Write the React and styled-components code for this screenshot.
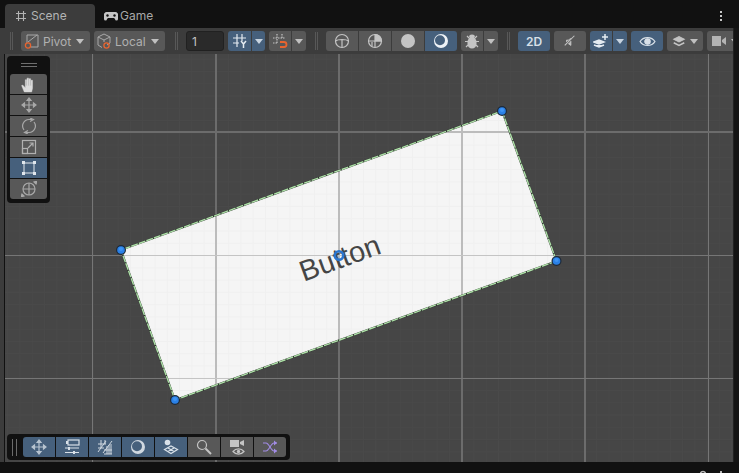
import React from "react";
import styled, { createGlobalStyle } from "styled-components";

const Global = createGlobalStyle`
  html, body { margin: 0; padding: 0; background: #111; }
  #root { width: 739px; height: 473px; overflow: hidden; }
`;

const Window = styled.div`
  width: 739px; height: 473px; display: flex; flex-direction: column;
  background: #111111; font-family: Inter, "Noto Sans", sans-serif; overflow: hidden;
`;
const TabBar = styled.div`
  height: 28px; flex: none; display: flex; align-items: flex-end; padding-left: 5px; position: relative;
`;
const Tab = styled.div`
  width: ${p => p.$w}px; height: 24px; display: flex; align-items: center; gap: ${p => p.$gap}px;
  padding-left: ${p => p.$pad}px; box-sizing: border-box; border-radius: 4px 4px 0 0;
  background: ${p => (p.$active ? "#3c3c3c" : "transparent")};
  color: ${p => (p.$active ? "#b4b4b4" : "#a8a8a8")}; font-size: 12px; line-height: 16px;
`;
const Kebab = styled.div`
  margin-left: auto; margin-right: 17px; align-self: center; margin-top: 4px;
  display: flex; flex-direction: column; gap: 2px;
  i { display: block; width: 2px; height: 2px; background: #c8c8c8; }
`;
const Body = styled.div`flex: none; height: 434px; display: flex;`;
const Main = styled.div`width: 733px; flex: none; display: flex; flex-direction: column;`;
const RightEdge = styled.div`
  flex: 1; background: #141414; border-left: 1px solid #222;
`;
const Toolbar = styled.div`
  height: 26px; flex: none; background: #3c3c3c; display: flex; align-items: center; gap: 4px;
  padding-left: 4px; overflow: hidden;
`;
const Grip = styled.div`
  flex: none; width: 3px; height: 18px; margin-left: ${p => p.$ml}px; margin-right: ${p => p.$mr}px;
  border-left: 1px solid #585858; border-right: 1px solid #585858; box-sizing: border-box;
`;
const Group = styled.div`display: flex; gap: 1px; flex: none;`;
const ToolButton = styled.div`
  flex: none; height: 20px; width: ${p => p.$w}px; box-sizing: border-box;
  display: flex; align-items: center; justify-content: ${p => (p.$pl !== undefined ? "flex-start" : "center")};
  padding-left: ${p => p.$pl || 0}px; gap: ${p => p.$gap || 0}px;
  background: ${p => (p.$on ? "#46607c" : "#585858")};
  color: ${p => (p.$on ? "#d8e0e8" : "#b0b0b0")};
  font-size: 12px; font-weight: ${p => (p.$bold ? 600 : 400)};
  border-radius: ${p => p.$radius || "3px"};
`;
const Caret = styled.span`
  flex: none; width: 0; height: 0; margin-left: ${p => p.$ml || 0}px;
  border-left: 4px solid transparent; border-right: 4px solid transparent;
  border-top: 5px solid ${p => (p.$on ? "#c8d4e0" : "#c0c0c0")};
`;
const NumberField = styled.div`
  flex: none; width: 38px; height: 20px; box-sizing: border-box; background: #2a2a2a;
  border: 1px solid #212121; border-radius: 3px; color: #c4c4c4; font-size: 12px;
  display: flex; align-items: center; padding-left: 5px;
`;
const Row = styled.div`flex: 1; display: flex; min-height: 0;`;
const LeftEdge = styled.div`
  width: 4px; flex: none; background: #3c3c3c; border-right: 1px solid #111;
`;
const Viewport = styled.div`flex: 1; position: relative; background: #464646; overflow: hidden;`;
const Scene = styled.svg`display: block; width: 728px; height: 408px;`;
const ButtonLabel = styled.text`
  font-family: "Liberation Sans", Arial, sans-serif; font-size: 29px; fill: #454545;
`;
const SideOverlay = styled.div`
  position: absolute; left: 2px; top: 2px; width: 43px; height: 147px; box-sizing: border-box;
  background: #111111; border-radius: 4px; padding: 0 3px; display: flex; flex-direction: column; gap: 1px;
`;
const SideGrip = styled.div`
  height: 17px; flex: none; display: flex; flex-direction: column; justify-content: center; align-items: center; gap: 2px;
  i { display: block; width: 16px; height: 1px; background: #6e6e6e; }
`;
const BottomOverlay = styled.div`
  position: absolute; left: 2px; top: 380px; height: 26px; width: 283px; box-sizing: border-box;
  background: #111111; border-radius: 4px; padding-left: 5px; display: flex; align-items: center; gap: 6px;
`;
const VGrip = styled.div`
  width: 5px; height: 17px; flex: none; box-sizing: border-box;
  border-left: 1px solid #6a6a6a; border-right: 1px solid #6a6a6a;
`;
const Footer = styled.div`flex: 1; position: relative; display: flex; justify-content: flex-end; gap: 12px; padding-right: 15px;`;
const FootMark = styled.svg`width: 6px; height: 11px; display: block;`;

const Ico = ({ s = 16, children, c = "#c4c4c4" }) => (
  <svg width={s} height={s} viewBox="0 0 16 16" fill="none" stroke={c} strokeWidth="1.2" style={{ flex: "none" }}>{children}</svg>
);
const OR = "#e8642f";

const PivotI = () => <Ico><path d="M3 10V2h11v12H7M4 9 13 2" strokeWidth="1" stroke="#a8a8a8" /><circle cx="4" cy="12.5" r="2.6" stroke={OR} strokeWidth="1.3" /></Ico>;
const LocalI = () => <Ico><path d="M8 1 14 4v6l-3 2M8 1 2 4v8l4 2.5M2 4l6 3 6-3M8 7v2" strokeWidth="1" stroke="#a8a8a8" /><circle cx="10.5" cy="12.5" r="2.6" stroke={OR} strokeWidth="1.3" /></Ico>;
const GridY = () => <Ico c="#e4eaf0"><path d="M5 1v13M10 1v7M1 5h13M1 10h6" /><path d="M9 8l2.500 3L14 8M11.500 11v4" strokeWidth="1.500" /></Ico>;
const GridMag = () => <Ico><path d="M5 1v9M10 1v4M1 5h12M1 10h5" strokeDasharray="1.5 1" /><path d="M8 9h4a2.500 2.500 0 0 1 0 5H8" stroke={OR} strokeWidth="1.800" /></Ico>;
const Globe = () => <Ico><circle cx="8" cy="8" r="6.500" /><path d="M1.500 8C4 6 12 6 14.500 8M8 7v7.500" /></Ico>;
const HalfGlobe = () => <Ico><circle cx="8" cy="8" r="6.500" /><path d="M8 8V1.500A6.500 6.500 0 0 1 14.500 8z" fill="#c4c4c4" /><path d="M1.500 8h13M5 9v4.500M8 8v6.500" /></Ico>;
const Solid = () => <Ico><circle cx="8" cy="8" r="7" fill="#c4c4c4" stroke="none" /></Ico>;
const Crescent = ({ c = "#eef2f6" }) => <Ico c={c}><path fillRule="evenodd" stroke="none" fill={c} d="M8 1a7 7 0 1 0 0 14A7 7 0 0 0 8 1zM7 2.200a5 5 0 1 1 0 10 5 5 0 0 1 0-10z" /></Ico>;
const Bug = () => <Ico><path d="M5 5h6l1.500 3v3a4.500 4.500 0 0 1-9 0V8z" fill="#c4c4c4" stroke="none" /><ellipse cx="8" cy="3.500" rx="2.800" ry="2" fill="#c4c4c4" stroke="none" /><path d="M3 3l2 2M13 3l-2 2M1 8.500h3M15 8.500h-3M2 14l2-2M14 14l-2-2" /></Ico>;
const Mute = () => <Ico s={14}><path d="M2 13 13 2" /><path d="M4 9v-2h2l3-2M9 8v5l-3-2" fill="#c4c4c4" strokeWidth="1" /></Ico>;
const Fx = () => <Ico c="#e4ebf2"><path d="M1 9l5-2 5 2-5 2zM1 12l5 2 5-2" strokeWidth="1.500" fill="#e4ebf2" /><path d="M12 1v6M9 4h6" strokeWidth="1.500" /></Ico>;
const Eye = () => <Ico s={17} c="#d8e0e8"><path d="M1 8c3-5 11-5 14 0-3 5-11 5-14 0z" /><circle cx="8" cy="8" r="2.500" fill="#d8e0e8" /></Ico>;
const Layers = () => <Ico s={14}><path d="M2 6l6-3 6 3-6 3z" fill="#c4c4c4" /><path d="M2 10l6 3 6-3" strokeWidth="1.800" /></Ico>;
const Cam = () => <Ico><rect x="1" y="3" width="9" height="10" fill="#b4b4b4" stroke="none" /><path d="M11 7l4-3v8l-4-3z" fill="#b4b4b4" stroke="none" /></Ico>;

const Hand = () => <Ico s={17} c="#dcdcdc"><path d="M4 15 1.500 9l1-.5L5 11V3.500h1.200V9h.4V2h1.500v7h.4V2.500h1.500V9h.4V4h1.400v7.500L11 15z" fill="#dcdcdc" stroke="#dcdcdc" strokeWidth=".4" /></Ico>;
const Move = ({ c = "#a8a8a8" }) => <Ico c={c}><path d="M8 3v10M3 8h10" /><path d="M6 3.500 8 1l2 2.500zM6 12.500 8 15l2-2.500zM3.500 6 1 8l2.500 2zM12.500 6 15 8l-2.500 2z" fill={c} /></Ico>;
const Rotate = () => <Ico c="#a8a8a8"><path d="M3 12A6.500 6.500 0 0 1 8 1.500h3M13 4a6.500 6.500 0 0 1-5 10.500H5" /><path d="M9 0l3.500 1.500L9 3.500M7 12.500l-3.500 2L7 16" /></Ico>;
const Scale = () => <Ico c="#b0b0b0"><rect x="1.500" y="1.500" width="13" height="13" /><rect x="1.500" y="9.500" width="5" height="5" /><path d="M7 9l5-5M8.500 4H12v3.500" /></Ico>;
const RectT = () => <Ico c="#e0e6ec"><path d="M3 3h10v10H3z" strokeWidth="1" /><path d="M1 1h3v3H1zM12 1h3v3h-3zM1 12h3v3H1zM12 12h3v3h-3z" fill="#e0e6ec" stroke="none" /></Ico>;
const Transform = () => <Ico c="#a8a8a8"><circle cx="8" cy="8" r="6" /><path d="M8 2v12M2 8h12" /><path d="M0 16l3-1-2-2zM16 0l-3 1 2 2z" fill="#a8a8a8" /></Ico>;
const Sliders = () => <Ico c="#d8e0e8"><rect x="4" y="1" width="11" height="5" /><path d="M1 9h14M1 13.500h14" /><path d="M3 2v3M5 8v3M10 12v3" strokeWidth="2" /></Ico>;
const Hatch = () => <Ico c="#d0d8e0"><path d="M1 5h8M1 9h6M1 13l8-11M4 1v8M8 1v4M6 14 15 2M10 7v8M12 6v9M14 5v10M7 11h8M7 15h8" strokeWidth="1" /></Ico>;
const Sphere = () => <Ico c="#d8e0e8"><circle cx="4.500" cy="3.500" r="2.800" fill="#d8e0e8" stroke="none" /><path d="M1.500 10.500 8 7l6.500 3.500L8 14.500zM5 9l6 3.500M11 9l-6 3.500" /></Ico>;
const Search = () => <Ico><circle cx="6" cy="6" r="4.500" /><path d="M9.500 9.500 15 15" strokeWidth="2" /></Ico>;
const CamEye = () => <Ico><rect x="1" y="1" width="9" height="7" fill="#c4c4c4" stroke="none" /><path d="M11 3l4-2v6l-4-2z" fill="#c4c4c4" stroke="none" /><path d="M4 12.500c3-3.500 8-3.500 11 0-3 3.500-8 3.500-11 0z" fill="#585858" /><circle cx="9.500" cy="12.500" r="1.700" fill="#c4c4c4" stroke="none" /></Ico>;
const Shuffle = () => <Ico c="#a28ce6"><path d="M1 4h3c3 0 5 8 8 8h3M1 12h3c3 0 5-8 8-8h3" /><path d="M12 1.500 15 4l-3 2.500zM12 9.500l3 2.500-3 2.500z" fill="#a28ce6" stroke="none" /></Ico>;
const GameI = () => <svg width="14" height="9" viewBox="0 0 14 9" style={{ flex: "none" }}><path d="M3 0h8a3 3 0 0 1 3 4v3a1.500 1.500 0 0 1-3 0L10 6H4L3 7a1.500 1.500 0 0 1-3 0V4a3 3 0 0 1 3-4z" fill="#c4c4c4" /><circle cx="3.500" cy="3.500" r="1.200" fill="#111" /><circle cx="10.500" cy="3.500" r="1.200" fill="#111" /></svg>;
const SceneI = () => <svg width="12" height="12" viewBox="0 0 12 12" fill="none" stroke="#b4b4b4" strokeWidth="1.100" style={{ flex: "none" }}><path d="M3.500 1v10M8.500 1v10M1 3.500h10M1 8.500h10" /></svg>;

const range = (s, e, step) => { const a = []; for (let v = s; v <= e; v += step) a.push(v); return a; };
const MX = 339, MY = 255.5;
const minorX = range(MX - 27 * 12.27, 740, 12.27);
const minorY = range(MY - 17 * 12.27, 470, 12.27);
const majorX = [[92.5, 1], [216, 2], [339, 2], [462, 2], [585, 2], [708.5, 1]];
const majorY = [[132, 2], [255.5, 1], [378.5, 1]];
const CORNERS = [[502, 111], [556.5, 261], [175, 400], [121, 250]];
const PTS = CORNERS.map(p => p.join(",")).join(" ");

const GridLines = ({ minor, major, wide }) => (
  <>
    {minorX.map(x => <line key={"a" + x} x1={x} x2={x} y1="54" y2="462" stroke={minor} />)}
    {minorY.map(y => <line key={"b" + y} y1={y} y2={y} x1="0" x2="739" stroke={minor} />)}
    {majorX.map(([x, w]) => <line key={"c" + x} x1={x} x2={x} y1="54" y2="462" stroke={w === 2 ? wide : major} strokeWidth={w} shapeRendering="crispEdges" />)}
    {majorY.map(([y, w]) => <line key={"d" + y} y1={y} y2={y} x1="0" x2="739" stroke={w === 2 ? wide : major} strokeWidth={w} shapeRendering="crispEdges" />)}
  </>
);

const Handle = ({ x, y }) => (
  <g>
    <circle cx={x} cy={y} r="5" fill="#1d2a3a" />
    <circle cx={x} cy={y} r="3.800" fill="#2a80e6" />
    <circle cx={x} cy={y - 1} r="2" fill="#3f94f5" />
  </g>
);

export default function App() {
  return (
    <Window>
      <Global />
      <TabBar>
        <Tab $active $w={90} $gap={4} $pad={10}><SceneI /><span>Scene</span></Tab>
        <Tab $w={70} $gap={2} $pad={9}><GameI /><span>Game</span></Tab>
        <Kebab><i /><i /><i /></Kebab>
      </TabBar>
      <Body>
        <Main>
          <Toolbar>
            <Grip $ml={6} $mr={4} />
            <ToolButton $w={69} $pl={3} $gap={3}><PivotI /><span>Pivot</span><Caret $ml={2} /></ToolButton>
            <ToolButton $w={71} $pl={2} $gap={3}><LocalI /><span>Local</span><Caret $ml={2} /></ToolButton>
            <Grip $ml={6} $mr={4} />
            <NumberField>1</NumberField>
            <Group>
              <ToolButton $w={23} $on $radius="3px 0 0 3px"><GridY /></ToolButton>
              <ToolButton $w={13} $on $radius="0 3px 3px 0"><Caret $on /></ToolButton>
            </Group>
            <Group>
              <ToolButton $w={22} $radius="3px 0 0 3px"><GridMag /></ToolButton>
              <ToolButton $w={14} $radius="0 3px 3px 0"><Caret /></ToolButton>
            </Group>
            <Grip $ml={5} $mr={4} />
            <Group>
              <ToolButton $w={32} $radius="3px 0 0 3px"><Globe /></ToolButton>
              <ToolButton $w={32} $radius="0"><HalfGlobe /></ToolButton>
              <ToolButton $w={32} $radius="0"><Solid /></ToolButton>
              <ToolButton $w={32} $on $radius="0 3px 3px 0"><Crescent /></ToolButton>
            </Group>
            <Group>
              <ToolButton $w={22} $radius="3px 0 0 3px"><Bug /></ToolButton>
              <ToolButton $w={14} $radius="0 3px 3px 0"><Caret /></ToolButton>
            </Group>
            <Grip $ml={5} $mr={4} />
            <ToolButton $w={32} $on $bold>2D</ToolButton>
            <ToolButton $w={32}><Mute /></ToolButton>
            <Group>
              <ToolButton $w={22} $on $radius="3px 0 0 3px"><Fx /></ToolButton>
              <ToolButton $w={14} $on $radius="0 3px 3px 0"><Caret $on /></ToolButton>
            </Group>
            <ToolButton $w={32} $on><Eye /></ToolButton>
            <ToolButton $w={36} $gap={4}><Layers /><Caret /></ToolButton>
            <ToolButton $w={36} $gap={4}><Cam /><Caret /></ToolButton>
          </Toolbar>
          <Row>
            <LeftEdge />
            <Viewport>
              <Scene viewBox="5 54 728 408">
                <defs><clipPath id="card"><polygon points={PTS} /></clipPath></defs>
                <GridLines minor="#4a4a4a" major="#767676" wide="#6c6c6c" />
                <polygon points={PTS} fill="#f5f5f5" />
                <g clipPath="url(#card)"><GridLines minor="#f0f0f0" major="#c4c4c4" wide="#bcbcbc" /></g>
                <polygon points={PTS} fill="none" stroke="#2a2f2a" strokeWidth="1.800" />
                <polygon points={PTS} fill="none" stroke="#aee0a8" strokeWidth="1.400" strokeDasharray="7 1" />
                <ButtonLabel x="339.500" y="268" textAnchor="middle" transform="rotate(-20 339.500 257)">Button</ButtonLabel>
                <circle cx="339" cy="255.500" r="4.200" fill="none" stroke="#2a76cf" strokeWidth="2.600" />
                {CORNERS.map(([x, y]) => <Handle key={x} x={x} y={y} />)}
              </Scene>
              <SideOverlay>
                <SideGrip><i /><i /></SideGrip>
                <ToolButton $w={37} $radius="3px 3px 0 0"><Hand /></ToolButton>
                <ToolButton $w={37} $radius="0"><Move /></ToolButton>
                <ToolButton $w={37} $radius="0"><Rotate /></ToolButton>
                <ToolButton $w={37} $radius="0"><Scale /></ToolButton>
                <ToolButton $w={37} $radius="0" $on><RectT /></ToolButton>
                <ToolButton $w={37} $radius="0 0 3px 3px"><Transform /></ToolButton>
              </SideOverlay>
              <BottomOverlay>
                <VGrip />
                <Group>
                  <ToolButton $w={32} $on $radius="3px 0 0 3px"><Move c="#b8c4d0" /></ToolButton>
                  <ToolButton $w={32} $on $radius="0"><Sliders /></ToolButton>
                  <ToolButton $w={32} $on $radius="0"><Hatch /></ToolButton>
                  <ToolButton $w={32} $on $radius="0"><Crescent c="#d0d8e0" /></ToolButton>
                  <ToolButton $w={32} $on $radius="0"><Sphere /></ToolButton>
                  <ToolButton $w={32} $radius="0"><Search /></ToolButton>
                  <ToolButton $w={32} $radius="0"><CamEye /></ToolButton>
                  <ToolButton $w={32} $radius="0 3px 3px 0"><Shuffle /></ToolButton>
                </Group>
              </BottomOverlay>
            </Viewport>
          </Row>
        </Main>
        <RightEdge />
      </Body>
      <Footer>
        <FootMark viewBox="0 0 6 11"><circle cx="3" cy="12" r="2.500" fill="none" stroke="#b8b8b8" strokeWidth="1.500" /></FootMark>
        <FootMark viewBox="0 0 6 11"><rect x="2" y="9" width="2" height="2" fill="#b8b8b8" /></FootMark>
      </Footer>
    </Window>
  );
}
